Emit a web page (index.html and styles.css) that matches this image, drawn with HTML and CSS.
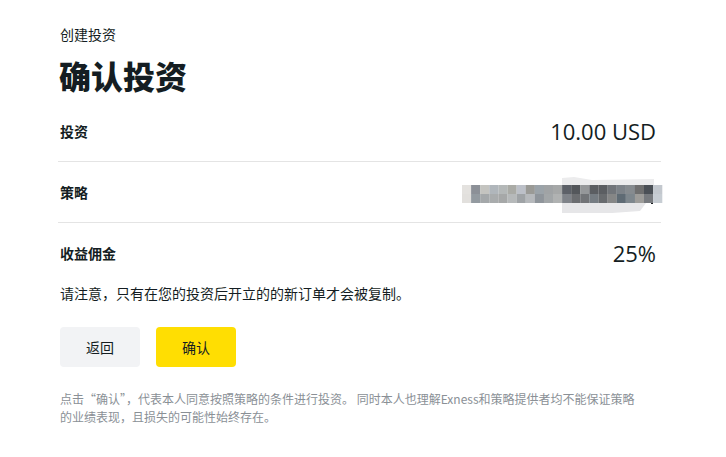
FILE: index.html
```html
<!DOCTYPE html>
<html lang="zh-CN">
<head>
<meta charset="utf-8">
<link rel="stylesheet" href="styles.css">
</head>
<body>
<main class="page">
  <div class="crumb">创建投资</div>
  <h1 class="title">确认投资</h1>
  <div class="row with-border">
    <span class="label">投资</span>
    <span class="value">10.00 USD</span>
  </div>
  <div class="row with-border">
    <span class="label">策略</span>
    <svg class="mosaic" width="202" height="36" viewBox="0 0 202 36">
      <path d="M100 1 L112 0 L130 3 L192 2 L192 8 L100 8 Z" fill="#ececed"/>
      <path d="M100 26 L184 26 L178 34 L150 36 L100 36 Z" fill="#e6e6e8"/>
      <g>
        <rect x="0" y="8" width="9.2" height="9" fill="#e4e2df"/>
        <rect x="9.1" y="8" width="9.2" height="9" fill="#8c9097"/>
        <rect x="18.2" y="8" width="9.2" height="9" fill="#c4c4c0"/>
        <rect x="27.3" y="8" width="9.2" height="9" fill="#b0b6bb"/>
        <rect x="36.4" y="8" width="9.2" height="9" fill="#b4b8b8"/>
        <rect x="45.5" y="8" width="9.2" height="9" fill="#aaaba6"/>
        <rect x="54.6" y="8" width="9.2" height="9" fill="#bcc0c8"/>
        <rect x="63.7" y="8" width="9.2" height="9" fill="#9a9a96"/>
        <rect x="72.8" y="8" width="9.2" height="9" fill="#9ba3a9"/>
        <rect x="81.9" y="8" width="9.2" height="9" fill="#a0a3a5"/>
        <rect x="91" y="8" width="9.2" height="9" fill="#a6a8a8"/>
        <rect x="100.1" y="8" width="9.2" height="9" fill="#5d6168"/>
        <rect x="109.2" y="8" width="9.2" height="9" fill="#54575b"/>
        <rect x="118.3" y="8" width="9.2" height="9" fill="#959799"/>
        <rect x="127.4" y="8" width="9.2" height="9" fill="#5b5e62"/>
        <rect x="136.5" y="8" width="9.2" height="9" fill="#5b5e62"/>
        <rect x="145.6" y="8" width="9.2" height="9" fill="#71757a"/>
        <rect x="154.7" y="8" width="9.2" height="9" fill="#7c8288"/>
        <rect x="163.8" y="8" width="9.2" height="9" fill="#868b8f"/>
        <rect x="172.9" y="8" width="9.2" height="9" fill="#6f6f6f"/>
        <rect x="182" y="8" width="9.2" height="9" fill="#4b5056"/>
        <rect x="191.1" y="8" width="9.2" height="9" fill="#c3c8ce"/>
      </g>
      <g>
        <rect x="0" y="17" width="9.2" height="9" fill="#e2e0dd"/>
        <rect x="9.1" y="17" width="9.2" height="9" fill="#939aa0"/>
        <rect x="18.2" y="17" width="9.2" height="9" fill="#a4a8aa"/>
        <rect x="27.3" y="17" width="9.2" height="9" fill="#a9acad"/>
        <rect x="36.4" y="17" width="9.2" height="9" fill="#a6a8a8"/>
        <rect x="45.5" y="17" width="9.2" height="9" fill="#b6b9ba"/>
        <rect x="54.6" y="17" width="9.2" height="9" fill="#9fa3a6"/>
        <rect x="63.7" y="17" width="9.2" height="9" fill="#b6b9bc"/>
        <rect x="72.8" y="17" width="9.2" height="9" fill="#8f959b"/>
        <rect x="81.9" y="17" width="9.2" height="9" fill="#a2a6a8"/>
        <rect x="91" y="17" width="9.2" height="9" fill="#b0b2b2"/>
        <rect x="100.1" y="17" width="9.2" height="9" fill="#7f8389"/>
        <rect x="109.2" y="17" width="9.2" height="9" fill="#6b6d70"/>
        <rect x="118.3" y="17" width="9.2" height="9" fill="#727477"/>
        <rect x="127.4" y="17" width="9.2" height="9" fill="#757c82"/>
        <rect x="136.5" y="17" width="9.2" height="9" fill="#686b6e"/>
        <rect x="145.6" y="17" width="9.2" height="9" fill="#858686"/>
        <rect x="154.7" y="17" width="9.2" height="9" fill="#5f6b74"/>
        <rect x="163.8" y="17" width="9.2" height="9" fill="#7e878d"/>
        <rect x="172.9" y="17" width="9.2" height="9" fill="#9d9c99"/>
        <rect x="182" y="17" width="9.2" height="9" fill="#777a7e"/>
        <rect x="191.1" y="17" width="9.2" height="9" fill="#c7cdd3"/>
      </g>
      <rect x="189" y="26" width="2" height="1" fill="#1c1f22"/>
    </svg>
  </div>
  <div class="row">
    <span class="label">收益佣金</span>
    <span class="value">25%</span>
  </div>
  <p class="note">请注意，只有在您的投资后开立的的新订单才会被复制。</p>
  <div class="actions">
    <button class="btn btn-back" type="button">返回</button>
    <button class="btn btn-confirm" type="button">确认</button>
  </div>
  <p class="disclaimer">点击“确认”，代表本人同意按照策略的条件进行投资。 同时本人也理解Exness和策略提供者均不能保证策略<br>的业绩表现，且损失的可能性始终存在。</p>
</main>
</body>
</html>
```

FILE: styles.css
```css
* { box-sizing: border-box; }
html, body {
  margin: 0;
  padding: 0;
  background: #ffffff;
}
body {
  font-family: "Noto Sans CJK SC", "Noto Sans", sans-serif;
  color: #141d22;
}
.page {
  width: 661px;
  padding: 24px 0 0 58px;
}
.crumb {
  font-size: 14px;
  line-height: 20px;
  padding-left: 2px;
}
.title {
  margin: 11px 0 6px;
  font-size: 32px;
  line-height: 40px;
  font-weight: 800;
  padding-left: 1px;
}
.row {
  display: flex;
  align-items: center;
  justify-content: space-between;
  height: 60px;
  padding-left: 2px;
}
.with-border {
  border-bottom: 1px solid #e4e4e4;
  height: 61px;
}
.label {
  font-size: 14px;
  font-weight: 700;
  line-height: 20px;
}
.value {
  font-family: "Open Sans", "Noto Sans", sans-serif;
  font-size: 22px;
  font-weight: 500;
  line-height: 30px;
  margin-right: 5px;
}
.mosaic {
  display: block;
  margin-right: -3px;
  margin-top: 6px;
}
.note {
  margin: 0 0 24px;
  font-size: 14px;
  line-height: 20px;
  padding-left: 2px;
}
.actions {
  display: flex;
  gap: 16px;
  padding-left: 2px;
}
.btn {
  width: 80px;
  height: 40px;
  border: none;
  border-radius: 4px;
  font-family: "Noto Sans CJK SC", "Noto Sans", sans-serif;
  font-size: 14px;
  color: #141d22;
  padding: 0;
}
.btn-back { background: #f2f3f5; }
.btn-confirm { background: #ffde02; }
.disclaimer {
  margin: 23px 0 0;
  padding-left: 2px;
  font-size: 12px;
  line-height: 18px;
  color: #8a9096;
  white-space: nowrap;
}
```
